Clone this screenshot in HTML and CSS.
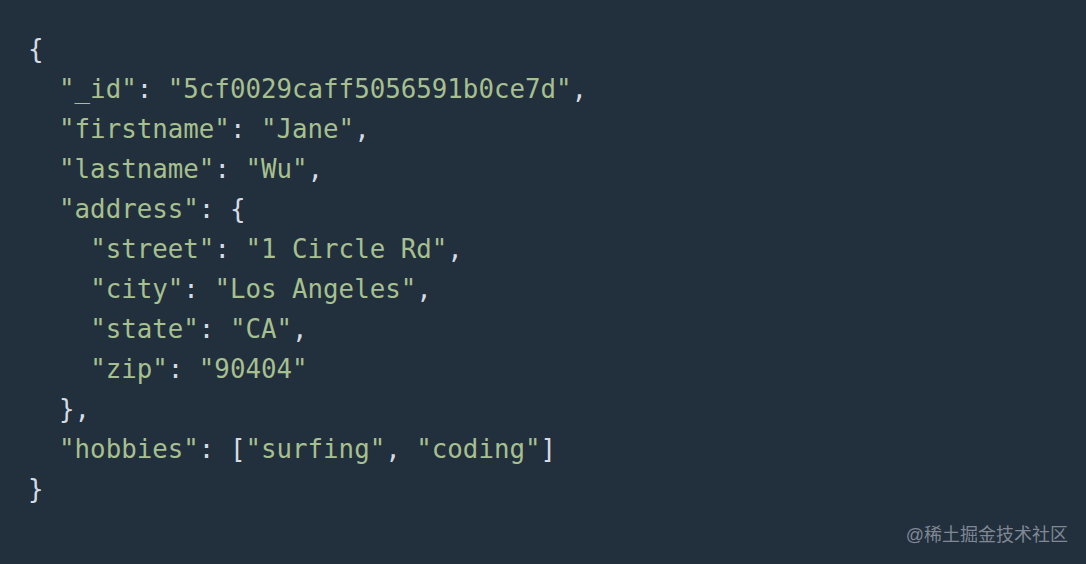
FILE: index.html
```html
<!DOCTYPE html>
<html lang="en">
<head>
<meta charset="utf-8">
<link rel="stylesheet" href="styles.css">
</head>
<body>
<main class="frame">
<pre class="code"><span class="p">{</span>
  <span class="s">"_id"</span><span class="p">:</span> <span class="s">"5cf0029caff5056591b0ce7d"</span><span class="p">,</span>
  <span class="s">"firstname"</span><span class="p">:</span> <span class="s">"Jane"</span><span class="p">,</span>
  <span class="s">"lastname"</span><span class="p">:</span> <span class="s">"Wu"</span><span class="p">,</span>
  <span class="s">"address"</span><span class="p">: {</span>
    <span class="s">"street"</span><span class="p">:</span> <span class="s">"1 Circle Rd"</span><span class="p">,</span>
    <span class="s">"city"</span><span class="p">:</span> <span class="s">"Los Angeles"</span><span class="p">,</span>
    <span class="s">"state"</span><span class="p">:</span> <span class="s">"CA"</span><span class="p">,</span>
    <span class="s">"zip"</span><span class="p">:</span> <span class="s">"90404"</span>
  <span class="p">},</span>
  <span class="s">"hobbies"</span><span class="p">: [</span><span class="s">"surfing"</span><span class="p">,</span> <span class="s">"coding"</span><span class="p">]</span>
<span class="p">}</span></pre>
<footer class="mark">@稀土掘金技术社区</footer>
</main>
</body>
</html>
```
FILE: styles.css
```css
html, body {
  margin: 0;
  padding: 0;
  background: #222f3d;
}
.frame {
  width: 1086px;
  height: 564px;
  box-sizing: border-box;
  padding: 29px 0 0 28px;
  display: flex;
  flex-direction: column;
  background: #222f3d;
}
.code {
  margin: 0;
  font-family: "DejaVu Sans Mono", monospace;
  font-size: 25.8px;
  line-height: 40px;
  color: #d5dbe3;
}
.s { color: #a7c08f; }
.p { color: #d5dbe3; }
.mark {
  margin-top: auto;
  align-self: flex-end;
  margin-right: 18px;
  margin-bottom: 18px;
  font-family: "Liberation Sans", "Noto Sans CJK SC", sans-serif;
  font-size: 18px;
  color: #7f8893;
}
```
